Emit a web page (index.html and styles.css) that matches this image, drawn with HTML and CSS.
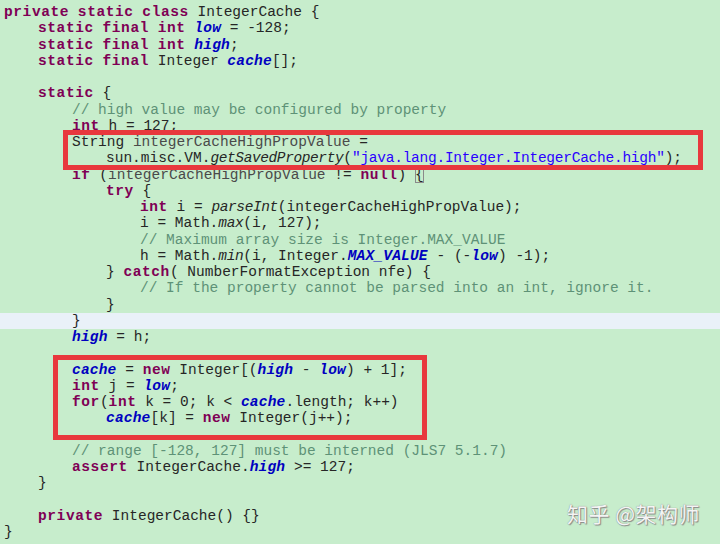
FILE: index.html
```html
<!DOCTYPE html>
<html>
<head>
<meta charset="utf-8">
<link rel="stylesheet" href="styles.css">
</head>
<body>
<div class="editor">
  <div class="code">
    <div class="ln i0"><span class="kw">private</span> <span class="kw">static</span> <span class="kw">class</span> IntegerCache {</div>
    <div class="ln i1"><span class="kw">static</span> <span class="kw">final</span> <span class="kw">int</span> <span class="fld">low</span> = -128;</div>
    <div class="ln i1"><span class="kw">static</span> <span class="kw">final</span> <span class="kw">int</span> <span class="fld">high</span>;</div>
    <div class="ln i1"><span class="kw">static</span> <span class="kw">final</span> Integer <span class="fld">cache</span>[];</div>
    <div class="ln"></div>
    <div class="ln i1"><span class="kw">static</span> {</div>
    <div class="ln i2"><span class="cm">// high value may be configured by property</span></div>
    <div class="ln i2"><span class="kw">int</span> h = 127;</div>
    <div class="ln i2">String <span class="var">integerCacheHighPropValue</span> =</div>
    <div class="ln i3">sun.misc.VM.<span class="it">getSavedProperty</span>(<span class="str">"java.lang.Integer.IntegerCache.high"</span>);</div>
    <div class="ln i2"><span class="kw">if</span> (<span class="var">integerCacheHighPropValue</span> != <span class="kw">null</span>) <span class="match">{</span></div>
    <div class="ln i3"><span class="kw">try</span> {</div>
    <div class="ln i4"><span class="kw">int</span> i = <span class="it">parseInt</span>(integerCacheHighPropValue);</div>
    <div class="ln i4">i = Math.<span class="it">max</span>(i, 127);</div>
    <div class="ln i4"><span class="cm">// Maximum array size is Integer.MAX_VALUE</span></div>
    <div class="ln i4">h = Math.<span class="it">min</span>(i, Integer.<span class="fld">MAX_VALUE</span> - (-<span class="fld">low</span>) -1);</div>
    <div class="ln i3">} <span class="kw">catch</span>( NumberFormatException nfe) {</div>
    <div class="ln i4"><span class="cm">// If the property cannot be parsed into an int, ignore it.</span></div>
    <div class="ln i3">}</div>
    <div class="ln i2 current">}</div>
    <div class="ln i2"><span class="fld">high</span> = h;</div>
    <div class="ln"></div>
    <div class="ln i2"><span class="fld">cache</span> = <span class="kw">new</span> Integer[(<span class="fld">high</span> - <span class="fld">low</span>) + 1];</div>
    <div class="ln i2"><span class="kw">int</span> j = <span class="fld">low</span>;</div>
    <div class="ln i2"><span class="kw">for</span>(<span class="kw">int</span> k = 0; k &lt; <span class="fld">cache</span>.length; k++)</div>
    <div class="ln i3"><span class="fld">cache</span>[k] = <span class="kw">new</span> Integer(j++);</div>
    <div class="ln"></div>
    <div class="ln i2"><span class="cm">// range [-128, 127] must be interned (JLS7 5.1.7)</span></div>
    <div class="ln i2"><span class="kw">assert</span> IntegerCache.<span class="fld">high</span> &gt;= 127;</div>
    <div class="ln i1">}</div>
    <div class="ln"></div>
    <div class="ln i1"><span class="kw">private</span> IntegerCache() {}</div>
    <div class="ln i0">}</div>
  </div>
  <div class="mark mark-a"></div>
  <div class="mark mark-b"></div>
  <div class="watermark">知乎 @架构师</div>
</div>
</body>
</html>
```

FILE: styles.css
```css
html, body {
  margin: 0;
  padding: 0;
  background: #c7edcc;
}

.editor {
  position: relative;
  width: 720px;
  height: 544px;
  overflow: hidden;
  background: #c7edcc;
}

.code {
  padding-top: 4px;
  font-family: "Liberation Mono", "DejaVu Sans Mono", monospace;
  font-size: 14.5px;
  line-height: 16.25px;
  color: #262626;
}

.ln {
  height: 16.25px;
  white-space: pre;
  padding-left: 4px;
}

.i1 { padding-left: 38px; }
.i2 { padding-left: 72px; }
.i3 { padding-left: 106px; }
.i4 { padding-left: 140px; }

.current {
  background: #e9f1f8;
}

.kw {
  color: #7f0055;
  font-weight: bold;
  letter-spacing: 0.6px;
}

.fld {
  color: #0000c0;
  font-weight: bold;
  font-style: italic;
  letter-spacing: 0.2px;
}

.it {
  font-style: italic;
  letter-spacing: -0.4px;
}

.str {
  color: #2a00ff;
  letter-spacing: -0.25px;
}

.cm {
  color: #5e9277;
}

.var {
  color: #4a4a4a;
}

.match {
  outline: 1px solid #8a8a8a;
  outline-offset: -1px;
}

.mark {
  position: absolute;
  border: 5px solid #e8383d;
  box-sizing: border-box;
}

.mark-a {
  left: 63px;
  top: 130px;
  width: 640px;
  height: 40px;
}

.mark-b {
  left: 53px;
  top: 355px;
  width: 374px;
  height: 85px;
}

.watermark {
  position: absolute;
  left: 567px;
  top: 499px;
  font-family: "Noto Sans CJK SC", "Noto Sans", sans-serif;
  font-size: 21px;
  line-height: 28px;
  color: #f4f4f4;
  text-shadow: 0 0 1px #7a7a7a, 1px 1px 1px #8a8a8a;
  letter-spacing: 0.5px;
}
```
